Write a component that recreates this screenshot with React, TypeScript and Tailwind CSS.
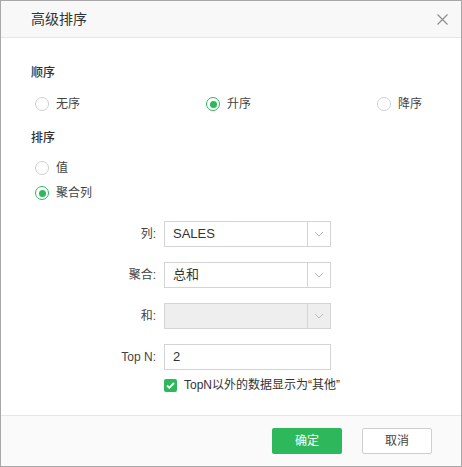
import React from "react"

const font = { fontFamily: '"Liberation Sans", "Noto Sans CJK SC", sans-serif' }

function Radio({ checked, label }: { checked?: boolean; label: string }) {
  return (
    <div className="flex items-center h-5">
      <span
        className={
          checked
            ? "w-[14px] h-[14px] rounded-full border border-[#2db85c] bg-white flex items-center justify-center"
            : "w-[14px] h-[14px] rounded-full border border-[#cfcfcf] bg-white"
        }
      >
        {checked && <span className="w-[7px] h-[7px] rounded-full bg-[#2db85c]" />}
      </span>
      <span className="ml-[7px] text-[12px] text-[#444]">{label}</span>
    </div>
  )
}

function Chevron() {
  return (
    <svg width="10" height="6" viewBox="0 0 10 6" fill="none">
      <path d="M1 1l4 4 4-4" stroke="#bbb" strokeWidth="1" />
    </svg>
  )
}

function Select({ value, disabled }: { value?: string; disabled?: boolean }) {
  return (
    <div
      className={
        disabled
          ? "w-[167px] h-[26px] border border-[#d4d4d4] bg-[#eeeeee] flex"
          : "w-[167px] h-[26px] border border-[#d4d4d4] bg-white flex"
      }
    >
      <div className="flex-1 pl-[8px] flex items-center text-[13px] text-[#333]">{value}</div>
      <div className="w-[23px] border-l border-[#d4d4d4] flex items-center justify-center">
        <Chevron />
      </div>
    </div>
  )
}

function Row({ label, children }: { label: string; children: React.ReactNode }) {
  return (
    <div className="flex items-center">
      <div className="w-[126px] text-right text-[12px] text-[#444] pr-[1px]">{label}</div>
      <div className="ml-[7px]">{children}</div>
    </div>
  )
}

export default function App() {
  return (
    <div style={font} className="w-[462px] h-[467px] border border-[#a8a8a8] bg-white flex flex-col">
      <div className="h-[37px] bg-[#f8f8f8] border-b border-[#e6e6e6] flex items-center justify-between pl-[30px] pr-[13px]">
        <span className="text-[14px] text-[#333]">高级排序</span>
        <svg width="11" height="11" viewBox="0 0 11 11">
          <path d="M0.5 0.5l10 10M10.5 0.5l-10 10" stroke="#8c8c8c" strokeWidth="1.1" />
        </svg>
      </div>

      <div className="flex-1 pl-[30px] pt-[25px]">
        <div className="text-[12px] leading-5 text-[#333] font-medium">顺序</div>
        <div className="mt-[11px] pl-[4px] grid grid-cols-[171px_171px_80px]">
          <Radio label="无序" />
          <Radio checked label="升序" />
          <Radio label="降序" />
        </div>
        <div className="mt-[14px] text-[12px] leading-5 text-[#333] font-medium">排序</div>
        <div className="mt-[10px] pl-[4px] flex flex-col gap-[5px]">
          <Radio label="值" />
          <Radio checked label="聚合列" />
        </div>

        <div className="mt-[18px] flex flex-col gap-[15px]">
          <Row label="列:">
            <Select value="SALES" />
          </Row>
          <Row label="聚合:">
            <Select value="总和" />
          </Row>
          <Row label="和:">
            <Select disabled />
          </Row>
          <Row label="Top N:">
            <div className="w-[167px] h-[26px] border border-[#d4d4d4] bg-white pl-[8px] flex items-center text-[13px] text-[#333]">
              2
            </div>
          </Row>
        </div>
        <div className="mt-[6px] ml-[133px] flex items-center h-[18px]">
          <span className="w-[13px] h-[13px] rounded-[2px] bg-[#2db85c] flex items-center justify-center">
            <svg width="9" height="7" viewBox="0 0 9 7" fill="none">
              <path d="M1 3.5l2.3 2.3L8 1" stroke="#fff" strokeWidth="1.8" />
            </svg>
          </span>
          <span className="ml-[7px] text-[12px] text-[#333]">TopN以外的数据显示为“其他”</span>
        </div>
      </div>

      <div className="h-[51px] bg-[#fafafa] border-t border-[#e6e6e6] flex items-center justify-end gap-[20px] pr-[29px]">
        <button className="w-[70px] h-[26px] rounded-[2px] bg-[#2db85c] text-white text-[12px]">确定</button>
        <button className="w-[70px] h-[26px] rounded-[2px] border border-[#cfcfcf] bg-white text-[#444] text-[12px]">
          取消
        </button>
      </div>
    </div>
  )
}
